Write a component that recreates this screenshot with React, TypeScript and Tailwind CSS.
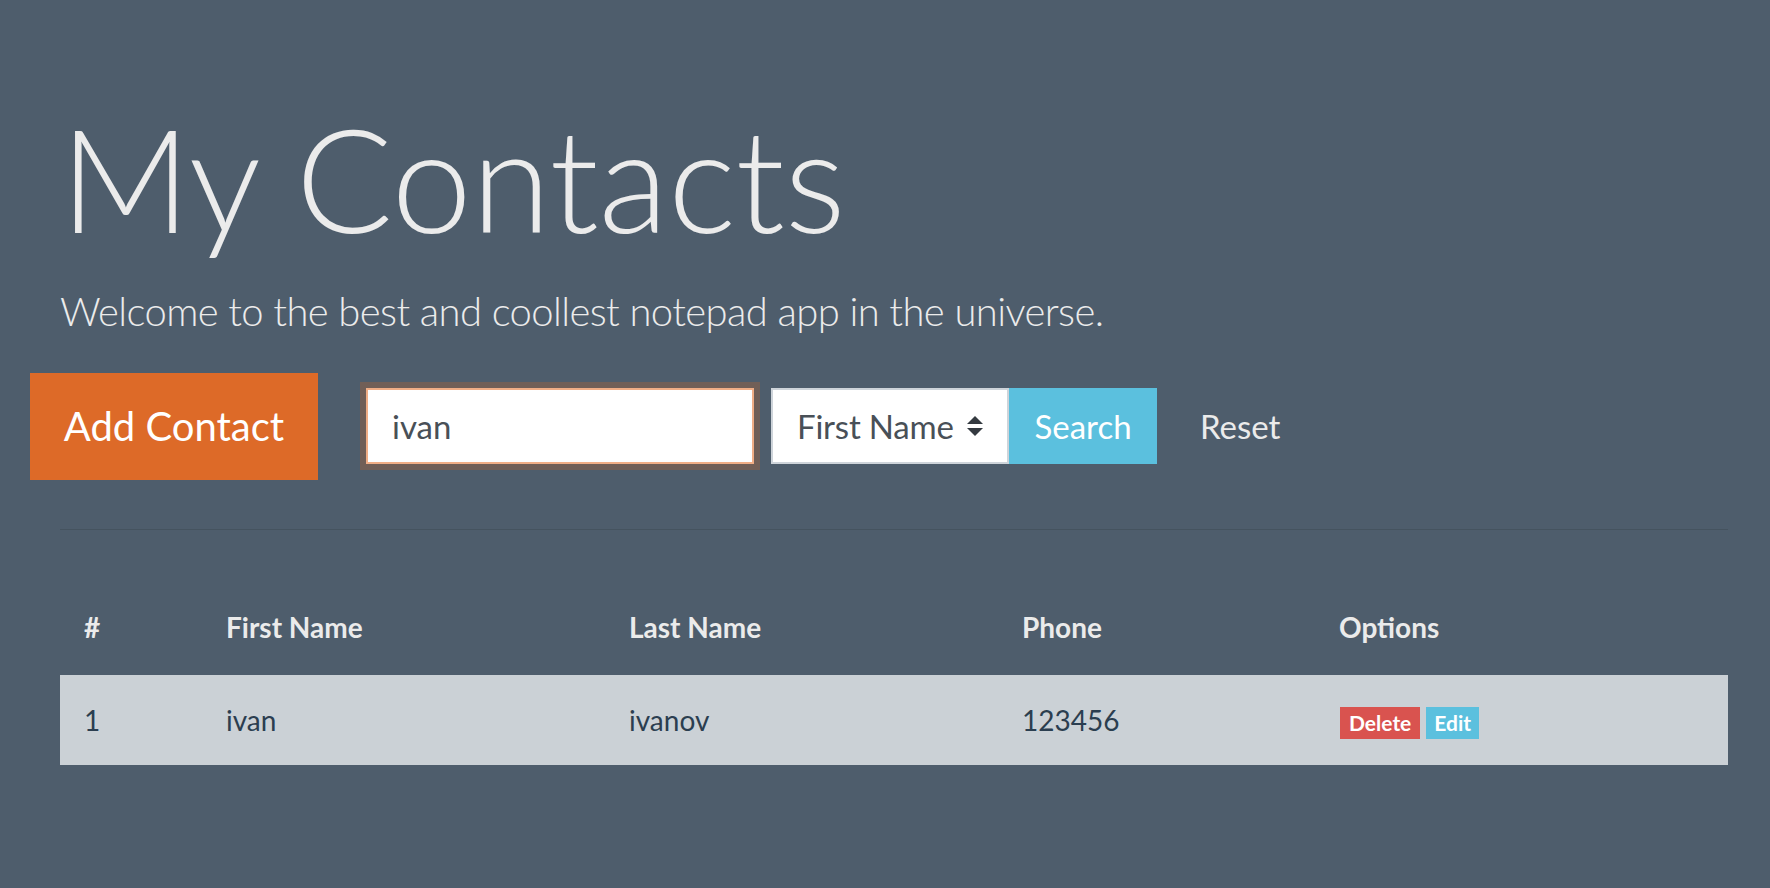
import { useState } from "react";

type Contact = {
  id: number;
  firstName: string;
  lastName: string;
  phone: string;
};

const contacts: Contact[] = [{ id: 1, firstName: "ivan", lastName: "ivanov", phone: "123456" }];

const cols = "grid grid-cols-[142px_403px_393px_317px_1fr]";

export default function App() {
  const [query, setQuery] = useState("ivan");

  return (
    <div className="min-h-screen bg-[#4e5d6c] font-[Lato,sans-serif] text-[#ebebeb]">
      <div className="pl-[60px] pr-[42px] pt-[92px]">
        <h1 className="text-[144px] font-light leading-[1.2] tracking-[-0.3px]">My Contacts</h1>
        <p className="mt-[16px] text-[40px] font-light leading-[1.5] tracking-[-0.6px]">
          Welcome to the best and coollest notepad app in the universe.
        </p>

        <div className="mt-[32px] -ml-[30px] flex items-center">
          <button className="h-[107px] w-[288px] bg-[#dd6a28] text-[40px] leading-[1.5] text-white">
            Add Contact
          </button>

          <input
            value={query}
            onChange={(e) => setQuery(e.target.value)}
            className="ml-[48px] h-[76px] w-[388px] border-2 border-[#f1ae86] bg-white pl-[24px] text-[33px] text-[#495057] outline-none ring-[6px] ring-[#715f57]"
          />

          <div className="ml-[17px] flex h-[76px]">
            <div className="flex w-[238px] items-center justify-between border-2 border-[#ced4da] bg-white pl-[24px] pr-[24px] text-[33px] tracking-[-0.2px] text-[#495057]">
              <span>First Name</span>
              <svg width="16" height="20" viewBox="0 0 16 20" className="text-[#343a40]">
                <path d="M8 0 L16 8 L0 8 Z M0 12 L16 12 L8 20 Z" fill="currentColor" />
              </svg>
            </div>
            <button className="w-[148px] bg-[#5bc0de] text-[33px] text-white">Search</button>
          </div>

          <button className="ml-[43px] text-[33px] text-[#ebebeb]">Reset</button>
        </div>

        <div className="mt-[49px] h-px bg-[#45535f]" />

        <div className="mt-[52px]">
          <div className={`${cols} h-[90px] items-center text-[28px] font-bold`}>
            <div className="pl-[24px]">#</div>
            <div className="pl-[24px]">First Name</div>
            <div className="pl-[24px]">Last Name</div>
            <div className="pl-[24px]">Phone</div>
            <div className="pl-[24px]">Options</div>
          </div>

          {contacts.map((c) => (
            <div
              key={c.id}
              className={`${cols} mt-[3px] h-[90px] items-center bg-[#cbd1d6] text-[28px] text-[#2b3e50]`}
            >
              <div className="pl-[24px]">{c.id}</div>
              <div className="pl-[24px]">{c.firstName}</div>
              <div className="pl-[24px]">{c.lastName}</div>
              <div className="pl-[24px]">{c.phone}</div>
              <div className="mt-[6px] flex gap-[6px] pl-[25px]">
                <button className="flex h-[32px] items-center bg-[#d9534f] px-[9px] text-[21px] font-bold text-white">
                  Delete
                </button>
                <button className="flex h-[32px] items-center bg-[#5bc0de] px-[8px] text-[21px] font-bold text-white">
                  Edit
                </button>
              </div>
            </div>
          ))}
        </div>
      </div>
    </div>
  );
}
